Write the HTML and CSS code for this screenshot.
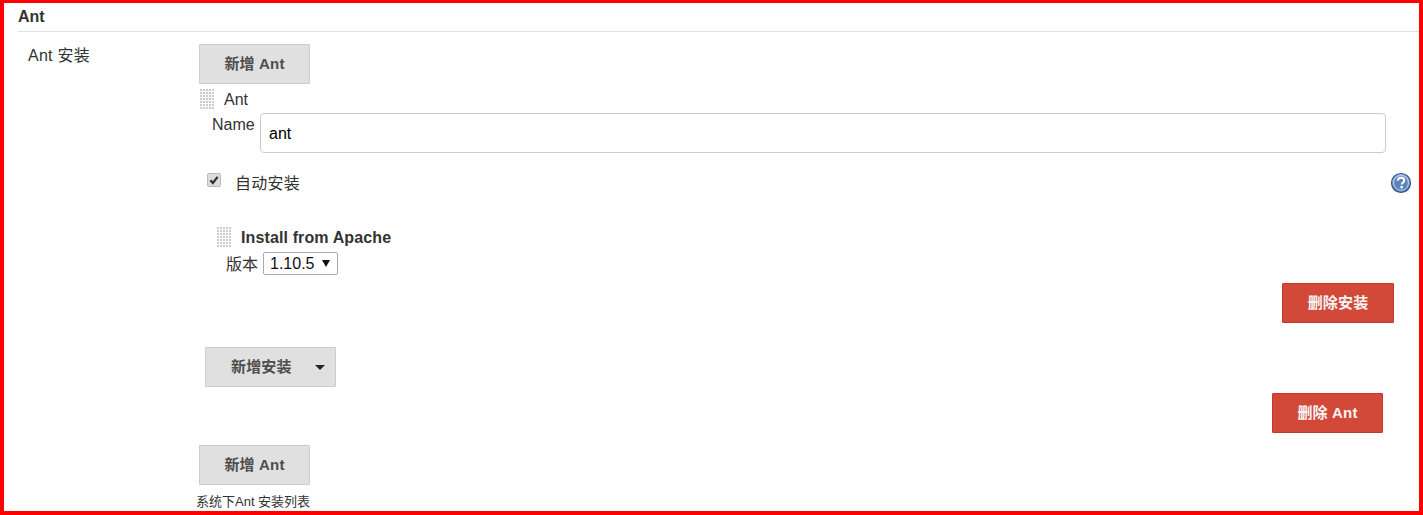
FILE: index.html
```html
<!DOCTYPE html>
<html lang="zh">
<head>
<meta charset="utf-8">
<title>Ant</title>
<link rel="stylesheet" href="styles.css">
</head>
<body>
<div class="frame">
  <div class="section-title">Ant</div>
  <div class="section-row">
    <div class="row-label">Ant 安装</div>
    <div class="row-body">
      <button class="btn">新增 Ant</button>
      <div class="ant-head"><span class="grip"></span><span class="ant-title">Ant</span></div>
      <div class="name-row">
        <label class="name-label">Name</label>
        <input class="text-input" type="text" value="ant">
      </div>
      <div class="auto-row">
        <span class="check"><svg viewBox="0 0 14 14" width="14" height="14"><path d="M3.4 7.3 L5.9 10 L10.6 3.9" fill="none" stroke="#333" stroke-width="2.2"/></svg></span>
        <span class="auto-label">自动安装</span>
        <svg class="help" viewBox="0 0 22 22" width="22" height="22">
          <defs><linearGradient id="hg" x1="0" y1="0" x2="0" y2="1"><stop offset="0" stop-color="#a9bfdc"/><stop offset="1" stop-color="#4a74ad"/></linearGradient></defs>
          <circle cx="11" cy="11" r="9.5" fill="url(#hg)" stroke="#2f5792" stroke-width="1.2"/>
          <circle cx="11" cy="11" r="7.4" fill="#5d84b9" stroke="#c3d3e7" stroke-width="1"/>
          <path d="M7.9 8.6 C8 6.6 9.4 5.7 11.1 5.7 C13 5.7 14.3 6.8 14.3 8.4 C14.3 10.4 11.7 10.6 11.7 12.6" fill="none" stroke="#fff" stroke-width="2"/>
          <rect x="10.5" y="14" width="2.3" height="2.3" fill="#fff"/>
        </svg>
      </div>
      <div class="install-head"><span class="grip"></span><b class="install-title">Install from Apache</b></div>
      <div class="version-row">
        <span class="version-label">版本</span>
        <span class="select-wrap">
          <select class="select"><option>1.10.5</option></select>
          <span class="select-caret"></span>
        </span>
      </div>
      <div class="right-a"><button class="btn btn-danger">删除安装</button></div>
      <button class="btn btn-add-install">新增安装<span class="caret"></span></button>
      <div class="right-b"><button class="btn btn-danger">删除 Ant</button></div>
      <button class="btn btn-add-bottom">新增 Ant</button>
      <div class="footnote">系统下Ant 安装列表</div>
    </div>
  </div>
</div>
</body>
</html>
```
FILE: styles.css
```css
* { box-sizing: border-box; }
html, body { margin: 0; padding: 0; background: #fff; }
body {
  font-family: "Liberation Sans", "Noto Sans CJK SC", sans-serif;
  font-size: 16px;
  color: #333;
}
.frame {
  width: 1423px;
  height: 515px;
  border: solid #f00;
  border-width: 3px 4px 4px 4px;
  padding-left: 14px;
  overflow: hidden;
}
.section-title {
  height: 29px;
  padding-top: 5px;
  line-height: 18px;
  font-weight: bold;
  border-bottom: 1px solid #e0e0e0;
}
.section-row { display: flex; padding-top: 12px; }
.row-label { width: 181px; padding-left: 10px; flex: none; line-height: 24px; letter-spacing: 0.25px; }
.row-body { flex: 1; min-width: 0; display: flex; flex-direction: column; align-items: flex-start; }
.btn {
  display: block;
  width: 111px;
  height: 40px;
  padding: 0 0 4px;
  border: 1px solid #ccc;
  border-radius: 1px;
  background: #e0e0e0;
  color: #4d4d4d;
  font: bold 15px "Liberation Sans", "Noto Sans CJK SC", sans-serif;
  letter-spacing: 0.15px;
  text-align: center;
}
.btn-danger { background: #d24939; border-color: #c4392b; color: #f5f5f5; }
.grip {
  display: block;
  flex: none;
  width: 15px;
  height: 21px;
  background-image: radial-gradient(circle at 1px 1px, #ccc 1px, transparent 1px);
  background-size: 3px 3px;
}
.ant-head { display: flex; align-items: center; height: 29px; padding-left: 1px; gap: 9px; }
.ant-title { margin-top: 2px; }
.ant-head .grip { margin-top: 1px; }
.name-row { display: flex; align-items: flex-start; width: 100%; padding-left: 13px; }
.name-label { width: 48px; line-height: 24px; flex: none; }
.text-input {
  width: 1126px;
  height: 40px;
  padding: 2px 8px 0;
  border: 1px solid #ccc;
  border-radius: 4px;
  font: 16px "Liberation Sans", sans-serif;
  color: #000;
  outline: none;
}
.auto-row { display: flex; align-items: center; width: 100%; height: 22px; margin-top: 19px; padding-left: 8px; }
.check {
  display: block;
  flex: none;
  width: 14px;
  height: 14px;
  margin-top: -6px;
  border: 1px solid #bbb;
  border-radius: 2px;
  background: #dcdcdc;
  overflow: hidden;
}
.check svg { display: block; margin: -1px; }
.auto-label { margin-left: 14px; margin-top: -2px; letter-spacing: 0.25px; }
.help { margin-left: auto; margin-right: 7px; flex: none; }
.install-head { display: flex; align-items: center; height: 21px; margin-top: 33px; padding-left: 18px; gap: 9px; }
.install-title { letter-spacing: 0.12px; }
.version-row { display: flex; align-items: center; height: 23px; margin-top: 4px; padding-left: 27px; gap: 5px; }
.version-label { margin-top: -2px; }
.select-wrap { display: block; position: relative; width: 75px; height: 23px; }
.select {
  appearance: none;
  display: block;
  width: 100%;
  height: 100%;
  padding: 0 0 0 6px;
  border: 1px solid #aaa;
  border-radius: 2px;
  background: #fff;
  font: 16px "Liberation Sans", sans-serif;
  color: #111;
}
.select-caret {
  position: absolute;
  right: 8px;
  top: 8px;
  border: solid transparent;
  border-width: 7px 4px 0;
  border-top-color: #111;
}
.right-a { width: 100%; margin-top: 8px; padding-right: 25px; display: flex; justify-content: flex-end; }
.right-a .btn { width: 112px; }
.btn-add-install { width: 131px; margin: 24px 0 0 6px; padding-left: 25px; display: flex; align-items: center; }
.caret {
  margin-left: 23px;
  margin-top: 5px;
  border: solid transparent;
  border-width: 5px 5px 0;
  border-top-color: #222;
}
.right-b { width: 100%; margin-top: 6px; padding-right: 36px; display: flex; justify-content: flex-end; }
.btn-add-bottom { margin-top: 12px; }
.footnote { margin: 9px 0 0 -3px; font-size: 13px; line-height: 16px; }
```
